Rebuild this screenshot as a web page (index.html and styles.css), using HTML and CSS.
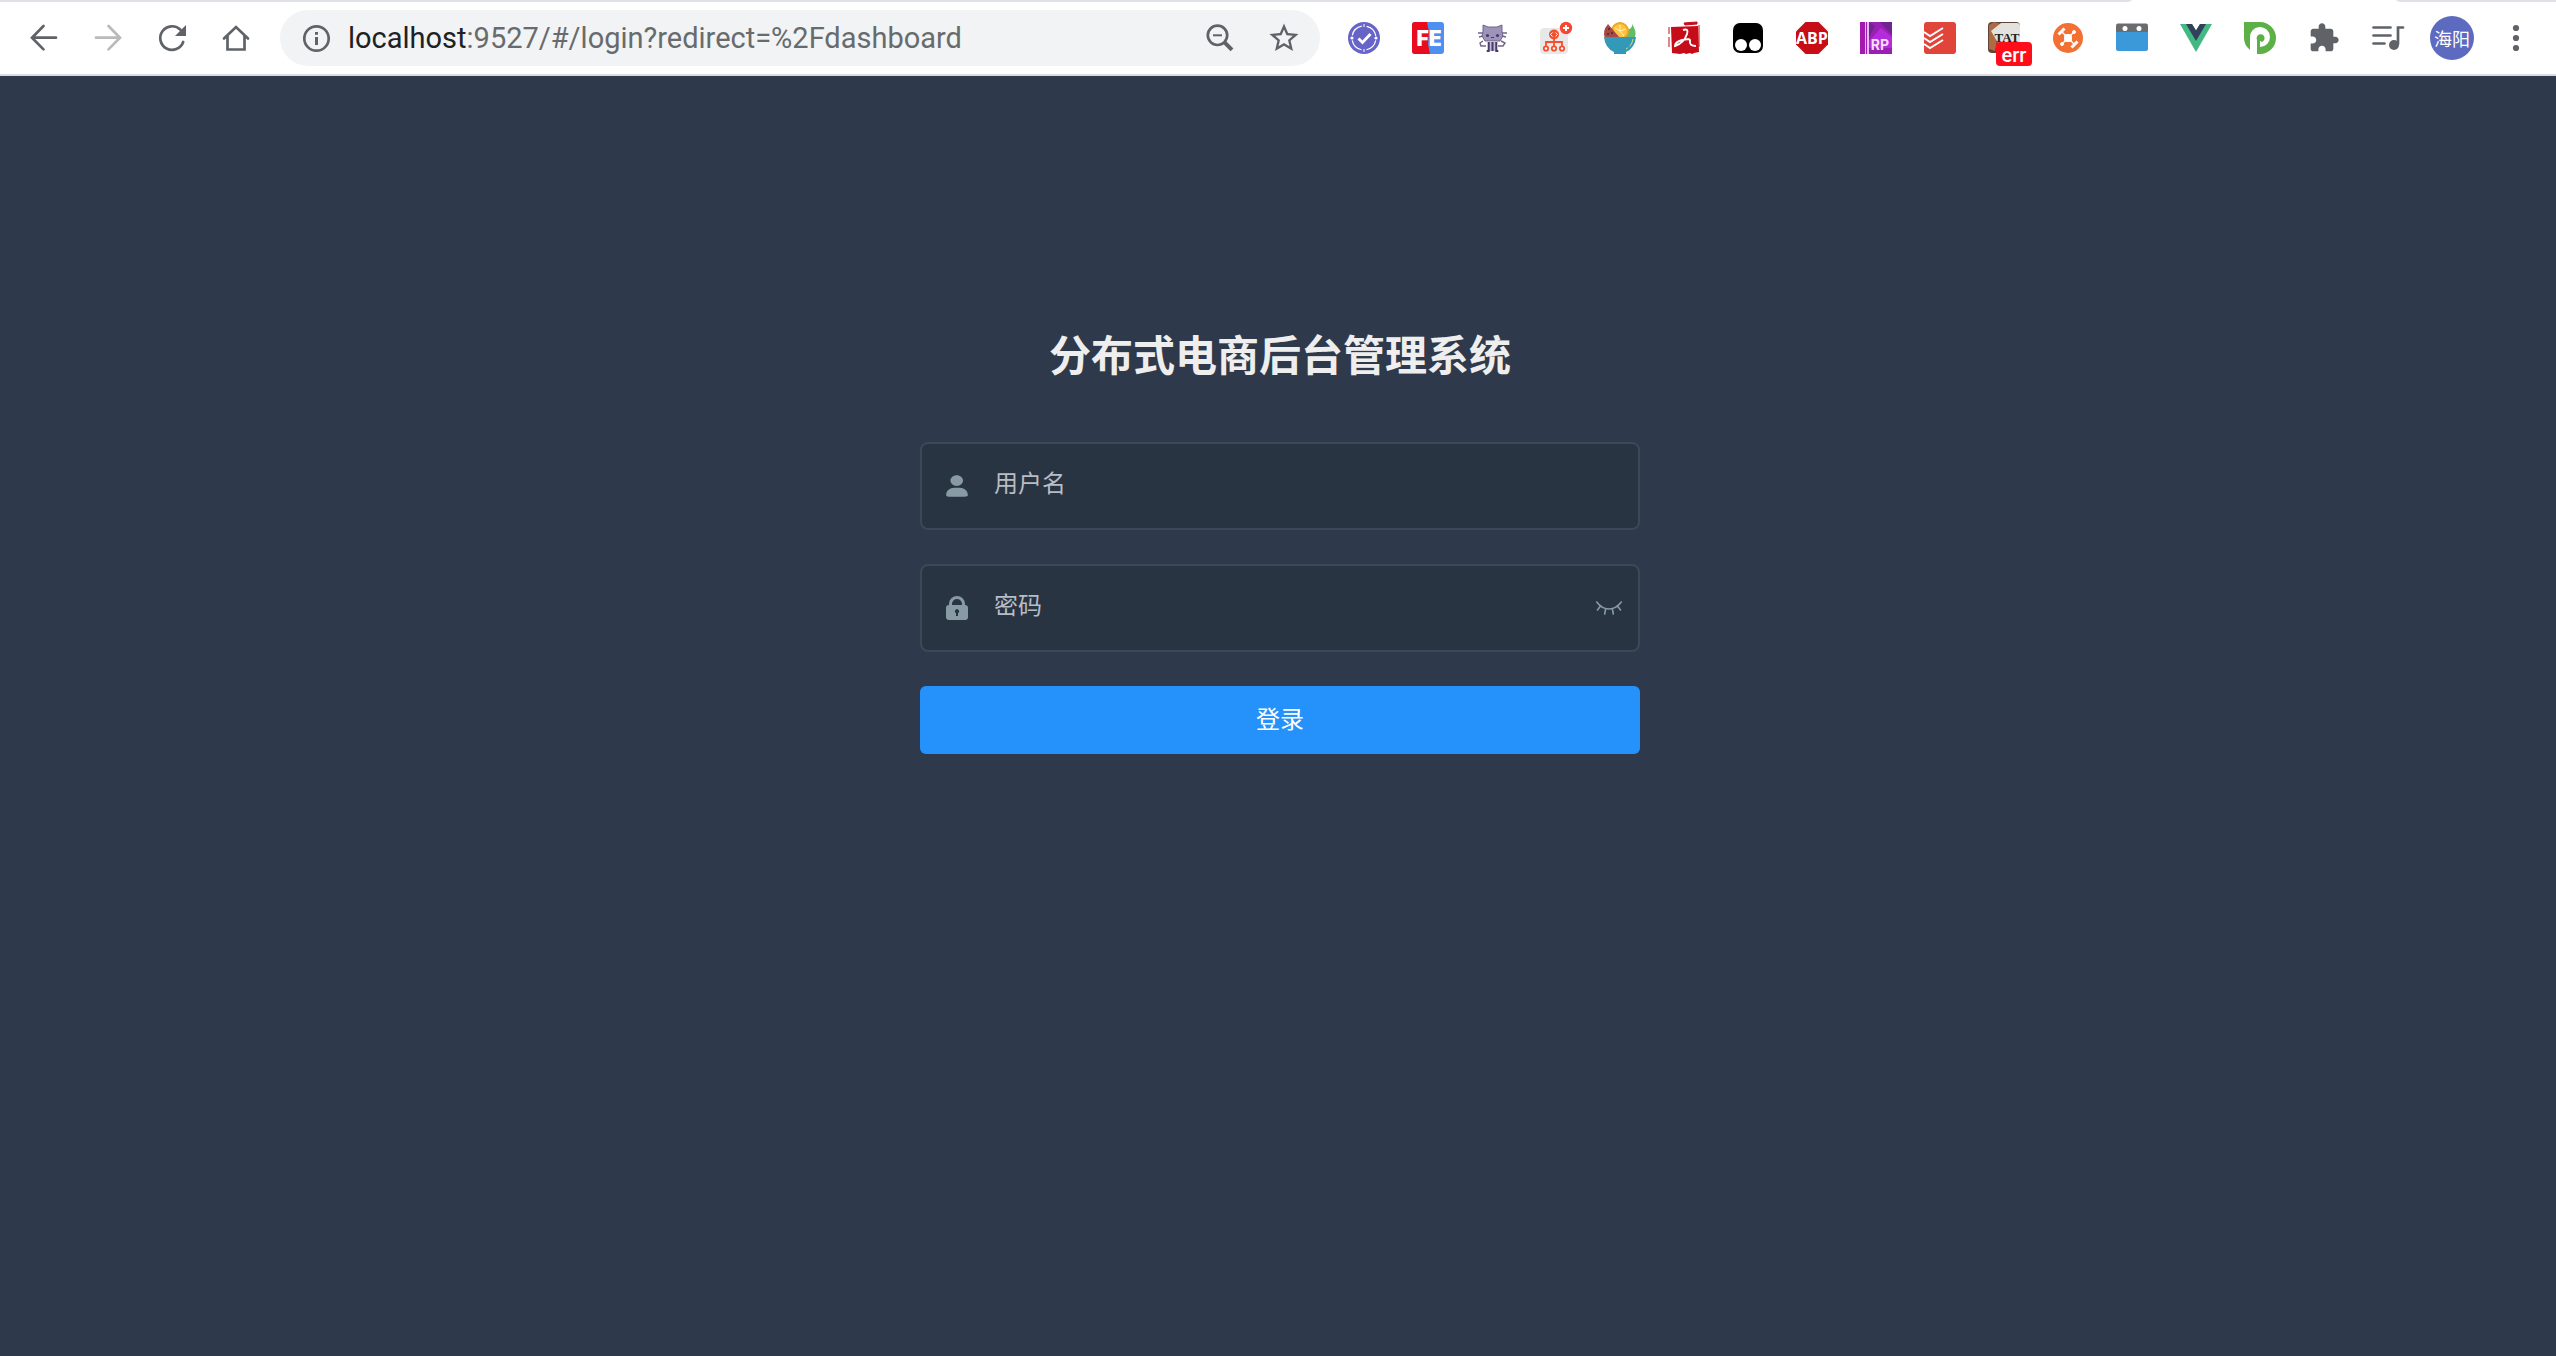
FILE: index.html
```html
<!DOCTYPE html>
<html lang="zh-CN">
<head>
<meta charset="utf-8">
<title>分布式电商后台管理系统</title>
<link rel="stylesheet" href="styles.css">
</head>
<body>
<header class="browser">
  <div class="tabstrip"><span class="tabs-before"></span><span class="tabs-after"></span></div>
  <div class="toolbar">
    <button class="cell" type="button" aria-label="Back"><svg class="icon line" viewBox="0 0 32 32"><path d="M28 15.7H5M15.500 4 4 15.7 15.500 27.4"/></svg></button>
    <button class="cell" type="button" aria-label="Forward" disabled><svg class="icon line" viewBox="0 0 32 32"><path d="M4 15.7h23M16.500 4l11.5 11.7L16.500 27.4"/></svg></button>
    <button class="cell" type="button" aria-label="Reload"><svg class="icon line" viewBox="0 0 32 32"><path d="M27.2 20A11.8 11.8 0 1 1 24.5 7.8"/><path class="solid" d="M30 3v11H19z"/></svg></button>
    <button class="cell" type="button" aria-label="Home"><svg class="icon line" viewBox="0 0 32 32"><path d="M4 16.5 16 5l12 11.500M7.500 14v13.500h17V14"/></svg></button>
    <div class="omnibox">
      <button class="site-info" type="button" aria-label="Site information"><svg class="icon line" viewBox="0 0 32 32"><circle cx="16.500" cy="16.500" r="12.200"/><path class="square" d="M16.500 15v8M16.500 10v2.800"/></svg></button>
      <div class="url" role="textbox" aria-label="Address" contenteditable="true" spellcheck="false"><span class="host">localhost</span>:9527/#/login?redirect=%2Fdashboard</div>
      <button class="cell" type="button" aria-label="Zoom"><svg class="icon line" viewBox="0 0 32 32"><circle cx="13.500" cy="13.300" r="9.700"/><path class="thin" d="M9 13.300h9"/><path class="handle" d="m20.500 20.300 7.500 7.500"/></svg></button>
      <button class="cell" type="button" aria-label="Bookmark"><svg class="icon gray" viewBox="1 1 22 22"><path d="m22 9.24-7.19-.62L12 2 9.19 8.63 2 9.24l5.46 4.73L5.82 21 12 17.27 18.18 21l-1.63-7.03L22 9.24zM12 15.4l-3.76 2.27 1-4.28-3.32-2.88 4.38-.38L12 6.1l1.71 4.04 4.38.38-3.32 2.88 1 4.28L12 15.4z"/></svg></button>
    </div>
    <button class="cell" type="button" aria-label="Task timer"><svg class="icon" viewBox="0 0 32 32"><circle cx="16" cy="16" r="16" fill="#6664c8"/><circle cx="16" cy="16" r="12" fill="none" stroke="#fff" stroke-width="1.2" stroke-dasharray="13.8 5" stroke-dashoffset="-2.5"/><path d="M16 2v3M16 27v3" stroke="#fff"/><circle cx="4" cy="16" r="1.6" fill="#fff"/><circle cx="28" cy="16" r="1.6" fill="#fff"/><path d="m10.5 16.5 4 4 8-8.5" fill="none" stroke="#fff" stroke-width="2.8"/></svg></button>
    <button class="cell" type="button" aria-label="FE helper"><svg class="icon" viewBox="0 0 32 32"><rect width="32" height="32" rx="3" fill="#4d90f0"/><path d="M3 0h12l2 10-1 12 2 10H3q-3 0-3-3V3q0-3 3-3z" fill="#ea0c1c"/><text class="fe" x="17" y="24" text-anchor="middle">FE</text></svg></button>
    <button class="cell" type="button" aria-label="Octocat"><svg class="icon" viewBox="0 0 32 32"><path d="M7 3l5 2h9l5-2v7l1 4-3 5H9l-3-5 1-4z" fill="#9d95b9" stroke="#706588"/><path d="M2 11h5M3 15l4-1M26 11h5M26 14l4 1M7 19l-3 2 1 3h5M25 19l4 2-2 3h-5" fill="none" stroke="#706588" stroke-width="1.4"/><path d="M12 19h9v10h-9z" fill="#c2bbd4"/><path d="M12.7 20v9h-2M16.5 20v9M20.3 20v9h2" fill="none" stroke="#493b68" stroke-width="2"/><circle cx="11.5" cy="13.5" r="1.6" fill="#493b68"/><circle cx="21.5" cy="13.5" r="1.6" fill="#493b68"/><path d="M15 15.5h3" stroke="#493b68"/></svg></button>
    <button class="cell" type="button" aria-label="Site map"><svg class="icon" viewBox="0 0 32 32"><rect y="6" width="28" height="26" rx="4" fill="#e9e8e8"/><g fill="none" stroke="#f4502d" stroke-width="1.8"><path d="M14 17v7M6 24v-4h16v4"/><circle cx="6" cy="26.5" r="2.2" fill="#fff"/><circle cx="14" cy="26.5" r="2.2" fill="#fff"/><circle cx="22" cy="26.5" r="2.2" fill="#fff"/></g><circle cx="14" cy="12.5" r="5" fill="#f4502d"/><path d="m12.5 10.5-2 2 2 2M15.5 10.5l2 2-2 2" fill="none" stroke="#fff"/><circle cx="26" cy="6" r="6.2" fill="#f54733"/><path d="M26 3v6M23 6h6" stroke="#fff" stroke-width="2"/></svg></button>
    <button class="cell" type="button" aria-label="Salad"><svg class="icon" viewBox="0 0 32 32"><path d="M22 8q7-1 6-6 5 7 3 13h-9z" fill="#63bd66"/><circle cx="16" cy="9" r="9" fill="#efa525"/><circle cx="16" cy="9" r="7" fill="#ffc342"/><path d="M16 9V3M16 9l-5-3M16 9l6-2M16 9l4 5" stroke="#fff0b7"/><path d="M4 2Q-2 9 1 16h15z" fill="#a74746"/><g fill="#412e31"><circle cx="5" cy="7" r="1"/><circle cx="4" cy="12" r="1"/><circle cx="8" cy="11" r="1"/></g><path d="M0 15h32q-1 11-10 15v2H10v-2Q1 26 0 15z" fill="#329ab8"/><path d="M29 17q-1 7-7 10" fill="none" stroke="#f4d06a" stroke-dasharray="8 2"/></svg></button>
    <button class="cell" type="button" aria-label="PDF"><svg class="icon" viewBox="0 0 32 32"><path d="m3 5 27-1 1 26-5 1-2 1-2-1-4 1-2-1-4 1-8-1z" fill="#c60c19"/><path d="M16 1l13-1v2L17 3zM1 5v7M1 15v10M31 3v22" fill="#c60c19" stroke="#c60c19"/><path d="M15 8q6-2 4 4-3 9-12 12 0-4 7-6 9-2 8 1-1 5 6 5" fill="none" stroke="#fff" stroke-width="1.900"/></svg></button>
    <button class="cell" type="button" aria-label="Tampermonkey"><svg class="icon" viewBox="0 0 32 32"><rect x="1" y="1" width="30" height="30" rx="7"/><circle cx="9" cy="23" r="6" fill="#fff"/><circle cx="23" cy="23" r="6" fill="#fff"/></svg></button>
    <button class="cell" type="button" aria-label="Adblock Plus"><svg class="icon" viewBox="0 0 32 32"><path d="M9.5 0h13L32 9.5v13L22.5 32h-13L0 22.5v-13z" fill="#c70d15"/><text class="abp" x="16" y="22" text-anchor="middle">ABP</text></svg></button>
    <button class="cell" type="button" aria-label="Axure RP"><svg class="icon" viewBox="0 0 32 32"><path d="M0 0h32v32H0z" fill="#9a20b5"/><path d="m9 0 6 4-6 12zM20 0l12 13V0z" fill="#6f258e"/><path d="m9 19 12-13 11 9v11H9z" fill="#b52bdc"/><path d="M0 0h5v32H0z" fill="#a41ab0"/><path d="M5 0h1v32H5zM7 0h2v32H7z" fill="#e7bdf0"/><text class="rp" x="20" y="28" text-anchor="middle">RP</text></svg></button>
    <button class="cell" type="button" aria-label="Todoist"><svg class="icon" viewBox="0 0 32 32"><rect width="32" height="32" rx="3" fill="#e14439"/><path d="m0 10 6 4 13-8M0 16l6 4 13-8M0 22l6 4 13-8" fill="none" stroke="#fff" stroke-width="2"/></svg></button>
    <button class="cell" type="button" aria-label="TAT"><svg class="icon" viewBox="0 0 32 32"><rect width="32" height="31" rx="4" fill="#5d4637"/><path d="m1 3 5-3 7 2-3 10-3 17-6-2z" fill="#ae6a42"/><path d="M13 1h16q3 0 3 3v17H10L3 9z" fill="#e3e2de"/><text class="tat" x="19" y="20" text-anchor="middle">TAT</text></svg><span class="badge">err</span></button>
    <button class="cell" type="button" aria-label="Drone"><svg class="icon" viewBox="0 0 32 32"><circle cx="16" cy="16" r="15" fill="#f37032"/><g stroke="#fff" fill="#fff"><path stroke-width="1.400" d="m10 10 12 12M22 10 10 22"/><path stroke-width="3" d="m6.500 12.500 6-6M19.500 25.500l6-6"/><rect x="12.500" y="12.500" width="7" height="7" rx="2"/><circle cx="22" cy="10" r="1.500"/><circle cx="10" cy="22" r="1.500"/></g></svg></button>
    <button class="cell" type="button" aria-label="Calendar"><svg class="icon" viewBox="0 0 32 32"><path d="M0 9h32v18q0 2-2 2H2q-2 0-2-2z" fill="#3b98d9"/><path d="M2 1.500h28q2 0 2 2V10H0V3.500q0-2 2-2z" fill="#6b6c6d"/><circle cx="9" cy="6.500" r="2.500" fill="#fff"/><circle cx="23" cy="6.500" r="2.500" fill="#fff"/></svg></button>
    <button class="cell" type="button" aria-label="Vue devtools"><svg class="icon" viewBox="0 0 32 32"><path d="M0 2h12l4 6.500L20 2h12L16 30z" fill="#42b883"/><path d="M6 2h6l4 6.500L20 2h6L16 19z" fill="#32405b"/></svg></button>
    <button class="cell" type="button" aria-label="P"><svg class="icon" viewBox="0 0 32 32"><path d="M0 0h16a16 16 0 0 1 0 32h-3V18a4 4 0 1 1 5 2l-2-1v6a10 10 0 1 0-10-9v12Q0 23 0 16z" fill="#5bb046"/></svg></button>
    <button class="cell" type="button" aria-label="Extensions"><svg class="icon gray" viewBox="0 0 24 24"><path d="M20.500 11H19V7c0-1.100-.9-2-2-2h-4V3.500C13 2.120 11.880 1 10.500 1S8 2.120 8 3.500V5H4c-1.100 0-1.990.9-1.990 2v3.800H3.500c1.490 0 2.700 1.210 2.700 2.700s-1.210 2.700-2.700 2.700H2V20c0 1.100.9 2 2 2h3.800v-1.500c0-1.490 1.210-2.700 2.700-2.700s2.700 1.210 2.700 2.700V22H17c1.100 0 2-.9 2-2v-4h1.500c1.380 0 2.500-1.120 2.500-2.500S21.880 11 20.500 11z"/></svg></button>
    <button class="cell" type="button" aria-label="Media"><svg class="icon line" viewBox="0 0 32 32"><path d="M1.500 5.500h17M1.500 13.500h17M1.500 21.500h11M26 22V5.500h5"/><circle class="solid" cx="22" cy="23" r="5"/></svg></button>
    <button class="cell" type="button"><span class="avatar">海阳</span></button>
    <button class="cell" type="button" aria-label="Menu"><svg class="icon gray" viewBox="0 0 32 32"><circle cx="16" cy="6" r="3.100"/><circle cx="16" cy="16" r="3.100"/><circle cx="16" cy="26" r="3.100"/></svg></button>
  </div>
</header>
<main class="login">
  <form class="login-form">
    <h1 class="title">分布式电商后台管理系统</h1>
    <div class="field">
      <label class="field-icon" for="username" aria-label="用户名"><svg class="user" viewBox="0 0 130 130"><path d="M63.444 64.996c20.633 0 37.359-14.308 37.359-31.953 0-17.649-16.726-31.952-37.359-31.952-20.631 0-37.360 14.303-37.360 31.952 0 17.645 16.729 31.953 37.360 31.953zM80.570 75.650H49.434c-26.652 0-48.260 18.477-48.260 41.270v2.664c0 9.316 21.608 9.325 48.260 9.325H80.570c26.649 0 48.256-.344 48.256-9.325v-2.663c0-22.794-21.605-41.271-48.256-41.271z"/></svg></label>
      <input class="field-input" id="username" type="text" placeholder="用户名">
    </div>
    <div class="field">
      <label class="field-icon" for="password" aria-label="密码"><svg class="lock" viewBox="0 0 22 24"><path fill-rule="evenodd" d="M3 9V8a8 8 0 0 1 16 0v1q3 0 3 3v9q0 3-3 3H3q-3 0-3-3v-9q0-3 3-3zM6 9h10V8A5 5 0 0 0 6 8zM10 17v3h2v-3a2 2 0 1 0-2 0z"/></svg></label>
      <input class="field-input" id="password" type="password" placeholder="密码">
      <button class="eye-button" type="button" aria-label="显示密码"><svg class="eye" viewBox="0 0 26 14"><path d="M.7 1Q6 8 13 8T25.300 1M4.500 5 1.500 9M9.700 7.500 8.700 13M16.300 7.500l1 5.500M21.500 5l3 4"/></svg></button>
    </div>
    <button class="submit" type="submit">登录</button>
  </form>
</main>
</body>
</html>
```
FILE: styles.css
```css
* { box-sizing: border-box; }

body {
  margin: 0;
  min-height: 100vh;
  display: flex;
  flex-direction: column;
  background: #2e394b;
  font-family: "Noto Sans CJK SC", sans-serif;
}

button {
  margin: 0;
  padding: 0;
  border: 0;
  background: none;
  font: inherit;
  color: inherit;
}

svg { display: block; }

/* Browser chrome */
.browser {
  background: #fff;
  border-bottom: 2px solid #dadde0;
}

.tabstrip {
  display: flex;
  justify-content: space-between;
  gap: 264px;
  height: 2px;
}

.tabs-before { flex: 1; background: #dee1e6; border-bottom-right-radius: 8px 2px; }
.tabs-after { width: 160px; background: #dee1e6; border-bottom-left-radius: 8px 2px; }

.toolbar {
  display: flex;
  align-items: center;
  height: 72px;
  padding: 0 8px 0 12px;
}

.cell {
  position: relative;
  flex: none;
  width: 64px;
  height: 44px;
  display: flex;
  align-items: center;
  justify-content: center;
}

.icon { width: 32px; height: 32px; overflow: visible; }
.gray { fill: #5f6368; }

.line {
  fill: none;
  stroke: #5f6368;
  stroke-width: 2.7;
  stroke-linecap: round;
}
.line .solid { fill: #5f6368; stroke: none; }
.line .thin { stroke-width: 2; stroke-linecap: butt; }
.line .handle { stroke-width: 4; stroke-linecap: butt; }
.line .square { stroke-width: 3; stroke-linecap: butt; }
.cell:disabled .line { stroke: #bababd; }

.omnibox {
  flex: 1;
  min-width: 0;
  height: 56px;
  margin: 0 12px;
  padding: 0 4px 0 20px;
  display: flex;
  align-items: center;
  border-radius: 28px;
  background: #f1f3f4;
}

.site-info { width: 32px; height: 32px; }

.url {
  flex: 1;
  min-width: 0;
  margin-left: 16px;
  overflow: hidden;
  white-space: nowrap;
  font: 29px/36px Roboto, sans-serif;
  color: #686b6e;
}
.host { color: #202124; }

.fe { font: 900 21px Inter, sans-serif; fill: #fff; }
.abp { font: 700 16px "Open Sans", sans-serif; fill: #fff; }
.rp { font: 700 14px Inter, sans-serif; fill: #f5dcfa; }
.tat { font: 700 13px "Liberation Serif", serif; fill: #222; }

.badge {
  position: absolute;
  left: 24px;
  top: 26px;
  width: 36px;
  height: 24px;
  border-radius: 4px;
  background: #ff0d1b;
  color: #fff;
  font: 500 20px/26px Roboto, sans-serif;
  text-align: center;
}

.avatar {
  width: 44px;
  height: 44px;
  border-radius: 50%;
  background: #5c6bc0;
  color: #fff;
  font-size: 18px;
  line-height: 44px;
  text-align: center;
}

/* Login page */
.login {
  flex: 1;
  padding: 246px 0 40px 4px;
}

.login-form {
  width: 100%;
  max-width: 720px;
  margin: 0 auto;
}

.title {
  margin: 0 0 58px;
  font-size: 42px;
  line-height: 62px;
  font-weight: 700;
  text-align: center;
  color: #eee;
}

.field {
  display: flex;
  height: 88px;
  margin-bottom: 34px;
  border: 2px solid #3d4856;
  border-radius: 8px;
  background: #283442;
}

.field-icon {
  width: 48px;
  padding-left: 24px;
  display: flex;
  align-items: center;
  fill: #889aa4;
}
.user { width: 22px; height: 22px; }
.lock { width: 22px; height: 24px; }

.field-input {
  flex: 1;
  min-width: 0;
  margin: 0;
  padding: 0 24px 8px;
  border: 0;
  outline: 0;
  background: transparent;
  color: #fff;
  font: 400 24px/36px "Noto Sans CJK SC", sans-serif;
}
.field-input::placeholder { color: #b8bcc4; opacity: 1; }

.eye-button { padding: 0 16px; }
.eye { width: 26px; height: 14px; fill: none; stroke: #889aa4; stroke-width: 1.6; stroke-linecap: round; }

.submit {
  display: block;
  width: 100%;
  height: 68px;
  padding-bottom: 4px;
  border-radius: 6px;
  background: #2592fc;
  color: #fff;
  font-size: 24px;
  line-height: 36px;
}
```
